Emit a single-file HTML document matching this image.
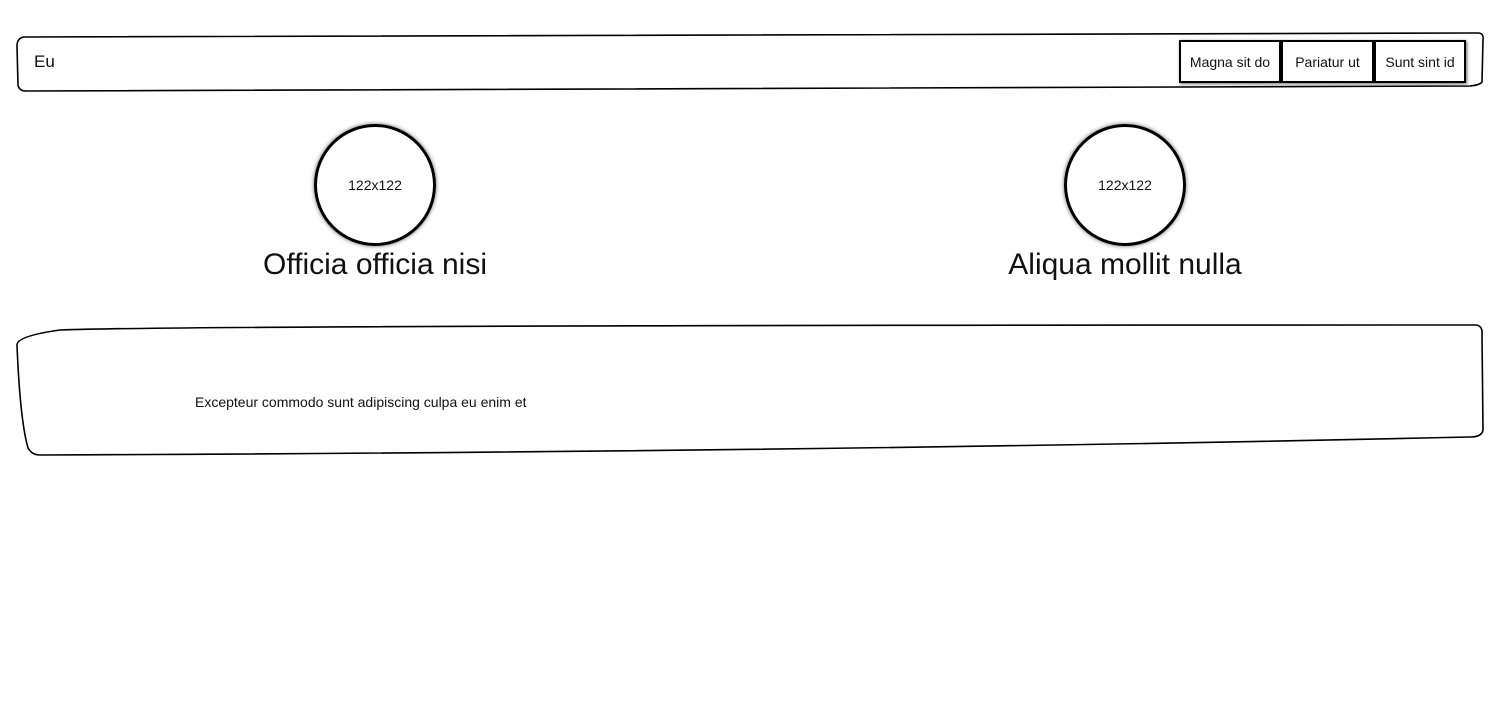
<!DOCTYPE html>
<html><head><meta charset="utf-8"><style>
body{margin:0;width:1500px;height:720px;background:#fff;position:relative;overflow:hidden;font-family:"Comic Sans MS","Liberation Sans",sans-serif;color:#111}
.a{position:absolute;white-space:nowrap}
.btn{position:absolute;top:40px;height:43px;border:2px solid #000;box-shadow:1px 1px 3px rgba(0,0,0,.6);background:#fff;font-size:14px;line-height:41px;text-align:center;box-sizing:border-box}
.c{position:absolute;width:122px;height:122px;border:3px solid #000;border-radius:50%;box-sizing:border-box;box-shadow:0 0 4px rgba(0,0,0,.6);font-size:14px;line-height:116px;text-align:center}
.t{position:absolute;font-size:30px;text-align:center;width:400px;top:248px}
</style></head><body>
<svg class="a" style="left:0;top:0" width="1500" height="720">
<path d="M24 37 Q300 34 1478 33 Q1484 33 1483 40 L1482 82 Q1480 85 1470 86 Q800 88 26 91 Q19 91 18 85 L17 46 Q17 38 24 37Z" fill="none" stroke="#000" stroke-width="1.6"/>
<path d="M60 330 Q200 325 1475 325 Q1483 325 1482 335 L1483 430 Q1482 437 1470 437 Q800 452 40 455 Q32 455 28 448 Q20 420 17 345 Q17 336 60 330Z" fill="none" stroke="#000" stroke-width="1.6"/>
</svg>
<div class="a" style="left:34px;top:52px;font-size:17px">Eu</div>
<div class="btn" style="left:1179px;width:102px">Magna sit do</div>
<div class="btn" style="left:1281px;width:93px">Pariatur ut</div>
<div class="btn" style="left:1374px;width:92px">Sunt sint id</div>
<div class="c" style="left:314px;top:124px">122x122</div>
<div class="c" style="left:1064px;top:124px">122x122</div>
<div class="t" style="left:175px">Officia officia nisi</div>
<div class="t" style="left:925px">Aliqua mollit nulla</div>
<div class="a" style="left:195px;top:394px;font-size:14px">Excepteur commodo sunt adipiscing culpa eu enim et</div>
</body></html>
